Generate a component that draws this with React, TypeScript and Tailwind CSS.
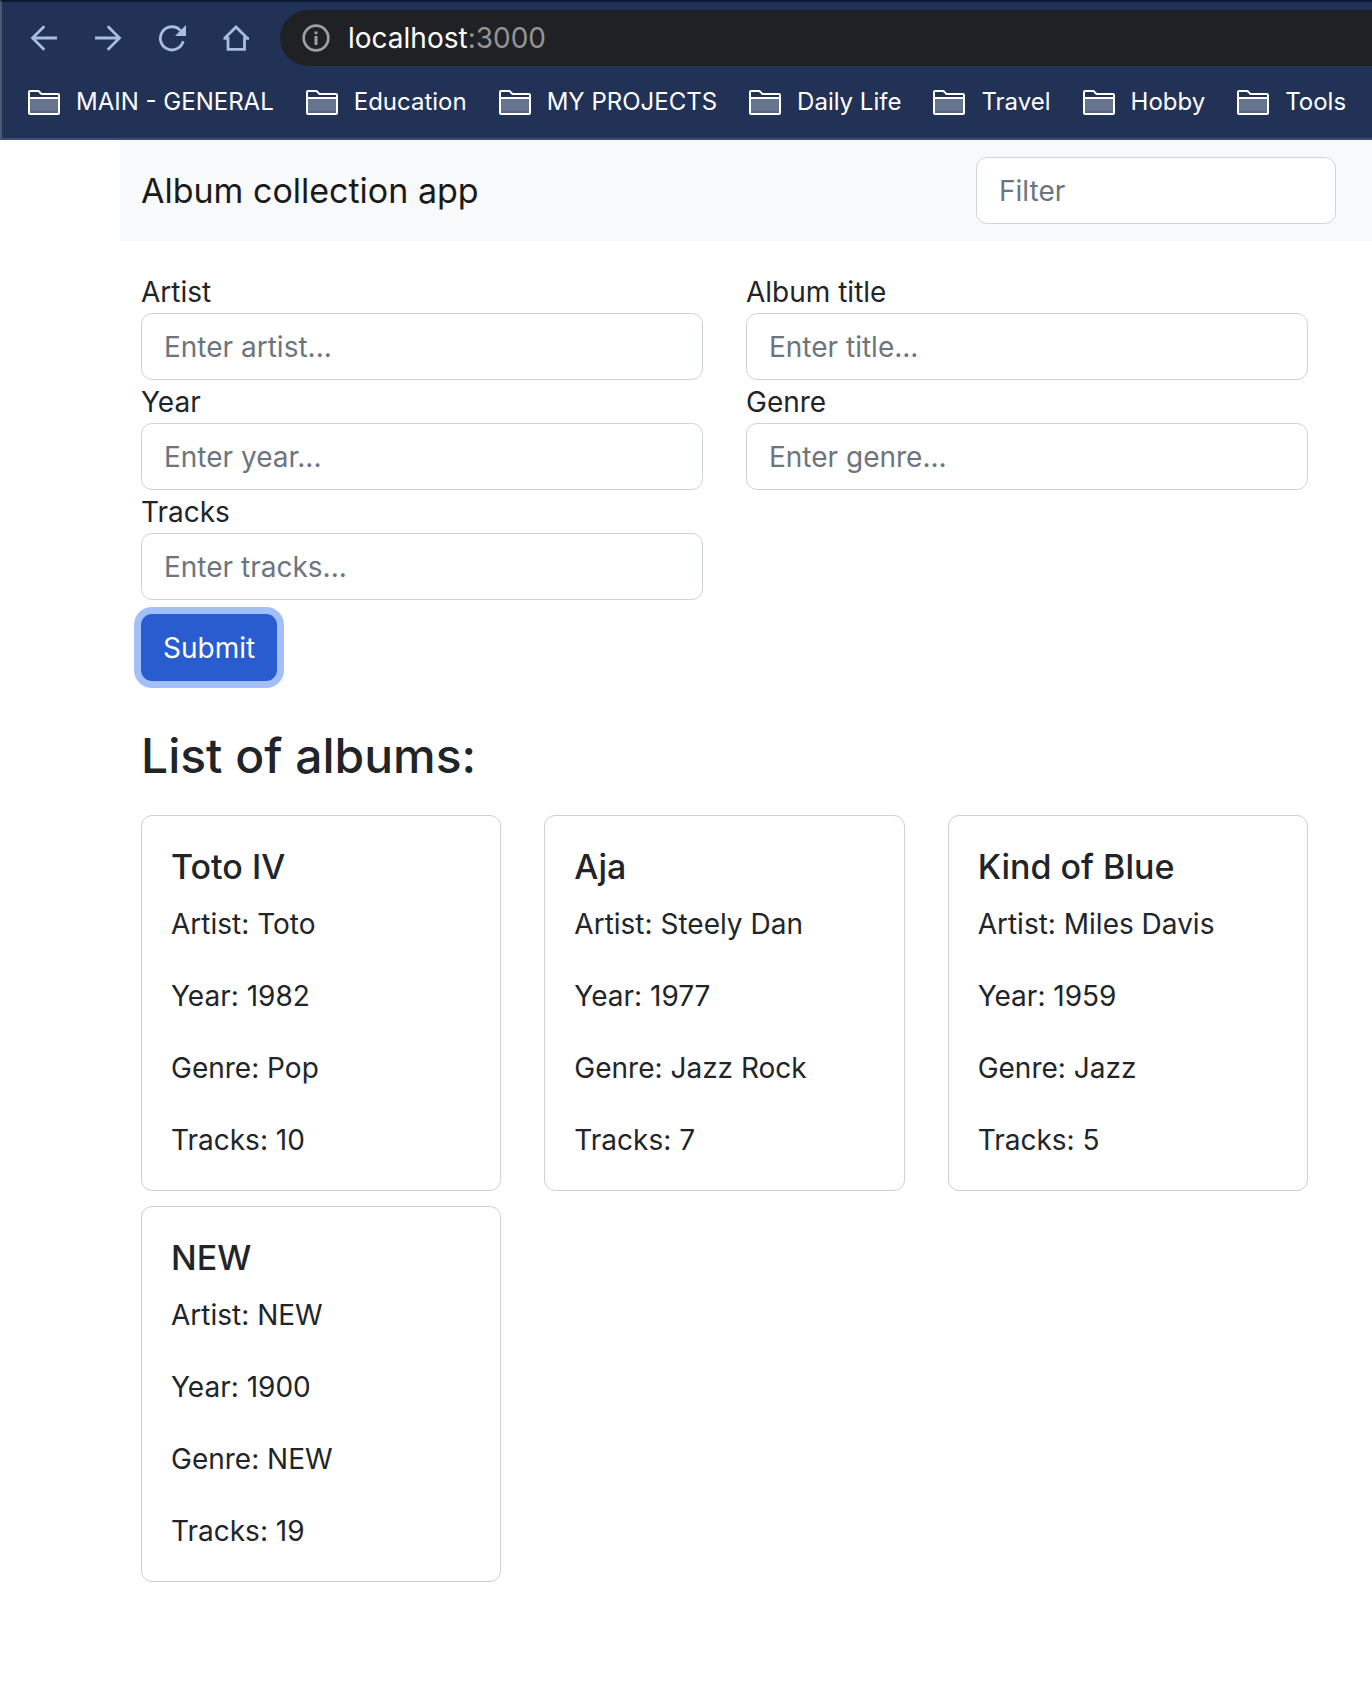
import type { ReactNode } from 'react';

type Album = {
  title: string;
  artist: string;
  year: number;
  genre: string;
  tracks: number;
};

const albums: Album[] = [
  { title: 'Toto IV', artist: 'Toto', year: 1982, genre: 'Pop', tracks: 10 },
  { title: 'Aja', artist: 'Steely Dan', year: 1977, genre: 'Jazz Rock', tracks: 7 },
  { title: 'Kind of Blue', artist: 'Miles Davis', year: 1959, genre: 'Jazz', tracks: 5 },
  { title: 'NEW', artist: 'NEW', year: 1900, genre: 'NEW', tracks: 19 },
];

const fields = [
  { id: 'artist', label: 'Artist', placeholder: 'Enter artist...' },
  { id: 'title', label: 'Album title', placeholder: 'Enter title...' },
  { id: 'year', label: 'Year', placeholder: 'Enter year...' },
  { id: 'genre', label: 'Genre', placeholder: 'Enter genre...' },
  { id: 'tracks', label: 'Tracks', placeholder: 'Enter tracks...' },
];

const bookmarks = ['MAIN - GENERAL', 'Education', 'MY PROJECTS', 'Daily Life', 'Travel', 'Hobby', 'Tools'];

const inputClass =
  'h-[67px] w-full rounded-[11px] border border-[#ced4da] bg-white px-[22px] text-[28px] text-[#212529] placeholder:text-[#6c757d] placeholder:opacity-100';

function NavButton({ label, children }: { label: string; children: ReactNode }) {
  return (
    <button type="button" aria-label={label} className="size-7 shrink-0 text-[#a9bddf]">
      <svg viewBox="0 0 28 28" className="size-7" fill="none" stroke="currentColor" strokeWidth="2.8">
        {children}
      </svg>
    </button>
  );
}

function FolderIcon() {
  return (
    <svg viewBox="0 0 32 25" className="h-[25px] w-8 shrink-0" fill="none" aria-hidden="true">
      <path d="M2 9h28v14H2z" fill="#66748f" />
      <path d="M2 21h28v2H2z" fill="#56657f" />
      <path d="M1 2q0-1 1-1h8.5l3 3H30q1 0 1 1v18q0 1-1 1H2q-1 0-1-1zM1 8h30" stroke="#fff" strokeWidth="2" />
    </svg>
  );
}

function BrowserBar() {
  return (
    <header className="border-t-2 border-b-2 border-l-2 border-t-[#0c1a33] border-b-[#3e4f74] border-l-[#4a5874] bg-[#213256] pt-2 text-white">
      <div className="flex items-center pl-7">
        <nav aria-label="Browser" className="flex gap-9">
          <NavButton label="Back">
            <path d="M27 14H3M14.3 2.2 2.5 14l11.8 11.8" />
          </NavButton>
          <NavButton label="Forward">
            <path d="M1 14h24M13.7 2.2 25.5 14 13.7 25.8" />
          </NavButton>
          <NavButton label="Reload">
            <path d="M22.6 6.6A11.6 11.6 0 1 0 25.2 17.2" />
            <path d="M28 1v11H17z" fill="currentColor" stroke="none" />
          </NavButton>
          <NavButton label="Home">
            <path d="M1.5 14.3H6V25.4H22.5V14.3H27M2.2 14.7 14 3l11.8 11.7" />
          </NavButton>
        </nav>
        <button type="button" className="ml-[30px] flex h-14 grow items-center gap-[18px] rounded-l-full bg-[#202124] pl-[22px] text-[28px]">
          <svg viewBox="0 0 28 28" className="size-7" fill="none" aria-hidden="true">
            <circle cx="14" cy="14" r="12.3" stroke="#9aa0a6" strokeWidth="2.7" />
            <path d="M12.5 7.5h3v2.7h-3zM12.5 12h3v9h-3z" fill="#9aa0a6" />
          </svg>
          <span>
            localhost<span className="text-[#939495]">:3000</span>
          </span>
        </button>
      </div>
      <nav aria-label="Bookmarks" className="flex h-[72px] items-center gap-8 overflow-hidden pl-[26px]">
        {bookmarks.map((name) => (
          <a key={name} href="#" className="flex shrink-0 items-center gap-4 text-[24px] whitespace-nowrap">
            <FolderIcon />
            {name}
          </a>
        ))}
      </nav>
    </header>
  );
}

function AlbumCard({ album }: { album: Album }) {
  return (
    <article className="rounded-[11px] border border-[#cfd0d2] px-[29px] pt-[29px] pb-[27px]">
      <h3 className="mb-[14px] text-[34px] leading-[43px] font-medium">{album.title}</h3>
      <div className="flex flex-col gap-[27px] leading-[45px]">
        <p>Artist: {album.artist}</p>
        <p>Year: {album.year}</p>
        <p>Genre: {album.genre}</p>
        <p>Tracks: {album.tracks}</p>
      </div>
    </article>
  );
}

export default function App() {
  return (
    <div className="min-h-screen bg-white font-['Inter',sans-serif] text-[28px] text-[#212529]">
      <BrowserBar />
      <div className="ml-[120px]">
        <div className="flex items-center justify-between bg-[#f8f9fb] py-[17px] pr-9 pl-[21px]">
          <a href="#" className="text-[34px] text-[#1a1a1a]">
            Album collection app
          </a>
          <div className="w-[360px]">
            <input type="text" aria-label="Filter" placeholder="Filter" className={inputClass} />
          </div>
        </div>
        <main className="pt-[29px] pr-16 pl-[21px]">
          <form onSubmit={(event) => event.preventDefault()}>
            <div className="grid grid-cols-2 gap-x-[43px]">
              {fields.map((field) => (
                <div key={field.id}>
                  <label htmlFor={field.id} className="block h-[43px] leading-[45px]">
                    {field.label}
                  </label>
                  <input id={field.id} type="text" placeholder={field.placeholder} className={inputClass} />
                </div>
              ))}
            </div>
            <button
              type="submit"
              className="mt-[14px] block h-[67px] rounded-[11px] bg-[#295ccf] px-[22px] text-white ring-7 ring-[#a3bffa]"
            >
              Submit
            </button>
          </form>
          <h2 className="mt-[45px] mb-[29px] text-[48px] leading-[60px] font-medium">List of albums:</h2>
          <div className="grid grid-cols-3 gap-x-[43px] gap-y-[15px]">
            {albums.map((album) => (
              <AlbumCard key={album.title} album={album} />
            ))}
          </div>
        </main>
      </div>
    </div>
  );
}
